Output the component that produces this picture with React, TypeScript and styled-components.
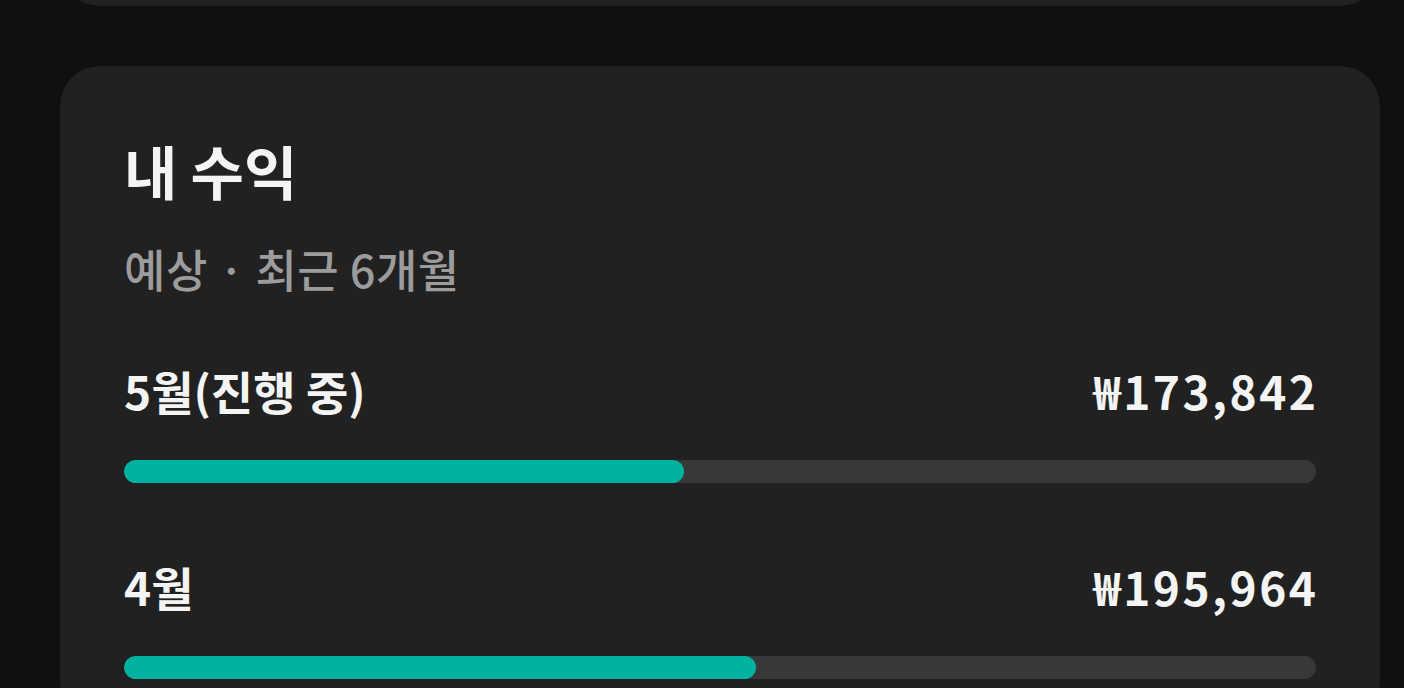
import React from "react";
import styled, { createGlobalStyle } from "styled-components";

const GlobalStyle = createGlobalStyle`
    html, body {
        margin: 0;
        padding: 0;
        background: #101010;
        font-family: "Noto Sans CJK KR", "Noto Sans", sans-serif;
        overflow: hidden;
    }
`;

const Page = styled.div`
    display: flex;
    flex-direction: column;
    gap: 60px;
    padding: 0 24px 0 60px;
    width: 1320px;
`;

const Card = styled.section`
    background: #212121;
    border-radius: 40px;
`;

const PrevCard = styled(Card)`
    height: 80px;
    margin-top: -74px;
`;

const EarningsCard = styled(Card)`
    padding: 68px 64px 40px;
    display: flex;
    flex-direction: column;
`;

const Title = styled.h2`
    margin: 0;
    color: #f4f4f4;
    font-size: 58px;
    font-weight: 700;
    line-height: 72px;
`;

const Subtitle = styled.p`
    margin: 35px 0 0;
    color: #9c9c9c;
    font-size: 45px;
    font-weight: 500;
    line-height: 56px;
    letter-spacing: 0.5px;
`;

const MonthList = styled.div`
    display: flex;
    flex-direction: column;
    gap: 75px;
    margin-top: 65px;
`;

const Month = styled.div`
    display: flex;
    flex-direction: column;
    gap: 42px;
`;

const Row = styled.div`
    display: flex;
    justify-content: space-between;
    align-items: center;
    color: #f4f4f4;
    font-size: 46px;
    font-weight: 600;
    line-height: 56px;
`;

const Amount = styled.span`
    letter-spacing: 2.5px;
    margin-right: -2.5px;
`;

const Track = styled.div`
    height: 23px;
    border-radius: 12px;
    background: #383838;
    overflow: hidden;
`;

const Fill = styled.div`
    height: 100%;
    border-radius: 12px;
    background: #00b3a0;
`;

const months = [
    { label: "5월(진행 중)", amount: "₩173,842", ratio: 47 },
    { label: "4월", amount: "₩195,964", ratio: 53 },
];

export default function App() {
    return (
        <>
            <GlobalStyle />
            <Page>
                <PrevCard />
                <EarningsCard>
                    <Title>내 수익</Title>
                    <Subtitle>예상 · 최근 6개월</Subtitle>
                    <MonthList>
                        {months.map((m) => (
                            <Month key={m.label}>
                                <Row>
                                    <span>{m.label}</span>
                                    <Amount>{m.amount}</Amount>
                                </Row>
                                <Track>
                                    <Fill style={{ width: `${m.ratio}%` }} />
                                </Track>
                            </Month>
                        ))}
                    </MonthList>
                </EarningsCard>
            </Page>
        </>
    );
}
